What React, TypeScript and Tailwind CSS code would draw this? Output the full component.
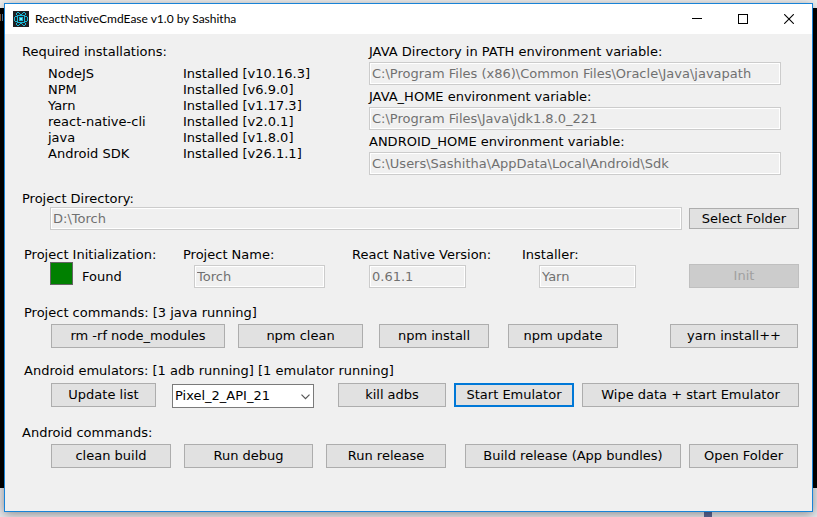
import { useState, type ReactNode } from "react";

const buttonBase =
  "flex shrink-0 items-center justify-center whitespace-nowrap text-[13px] leading-4";

function ActionButton({
  children,
  className = "",
  focused = false,
  disabled = false,
}: {
  children: ReactNode;
  className?: string;
  focused?: boolean;
  disabled?: boolean;
}) {
  const tone = disabled
    ? "border border-[#bfbfbf] bg-[#cccccc] text-[#a0a0a0]"
    : focused
      ? "border-2 border-[#0078d7] bg-[#e1e1e1] text-black"
      : "border border-[#adadad] bg-[#e1e1e1] text-black";
  return (
    <button type="button" disabled={disabled} className={`${buttonBase} ${tone} ${className}`}>
      {children}
    </button>
  );
}

function ReadOnlyField({ id, value, className = "" }: { id: string; value: string; className?: string }) {
  return (
    <input
      id={id}
      type="text"
      readOnly
      value={value}
      className={`h-[23px] min-w-0 border border-[#cccccc] bg-[#f0f0f0] px-[2px] text-[13px] leading-4 text-[#707070] shadow-[inset_0_0_0_1px_#ffffff] outline-none ${className}`}
    />
  );
}

const tools = [
  ["NodeJS", "v10.16.3"],
  ["NPM", "v6.9.0"],
  ["Yarn", "v1.17.3"],
  ["react-native-cli", "v2.0.1"],
  ["java", "v1.8.0"],
  ["Android SDK", "v26.1.1"],
];

const environment = [
  { id: "java-path", label: "JAVA Directory in PATH environment variable:", value: "C:\\Program Files (x86)\\Common Files\\Oracle\\Java\\javapath" },
  { id: "java-home", label: "JAVA_HOME environment variable:", value: "C:\\Program Files\\Java\\jdk1.8.0_221" },
  { id: "android-home", label: "ANDROID_HOME environment variable:", value: "C:\\Users\\Sashitha\\AppData\\Local\\Android\\Sdk" },
];

function AppIcon() {
  return (
    <svg width="16" height="16" viewBox="0 0 16 16" aria-hidden="true" shapeRendering="crispEdges" className="shrink-0">
      <rect width="16" height="16" fill="#1f2024" />
      <path
        d="M4 1h2v1H4zM10 1h2v1h-2zM3 2h1v2H3zM6 2h1v1H6zM9 2h1v1H9zM12 2h1v2h-1zM7 3h2v1H7zM4 4h8v1H4zM2 5h2v1H2zM12 5h2v1h-2zM4 5h1v6H4zM11 5h1v6h-1zM1 6h1v1H1zM14 6h1v1h-1zM1 9h1v1H1zM14 9h1v1h-1zM2 10h2v1H2zM12 10h2v1h-2zM4 11h8v1H4zM7 12h2v1H7zM3 12h1v2H3zM12 12h1v2h-1zM6 13h1v1H6zM9 13h1v1H9zM4 14h2v1H4zM10 14h2v1h-2zM1 7h1v2H1zM14 7h1v2h-1z"
        fill="#17b4d3"
      />
      <path d="M6 6h4v4H6z" fill="#17b4d3" />
      <path d="M7 7h2v2H7z" fill="#7af0ff" />
    </svg>
  );
}

function TitleBar() {
  const control = "flex h-[30px] w-[46px] items-center justify-center";
  return (
    <header className="flex h-[30px] items-center bg-white pl-2">
      <AppIcon />
      <h1 className="ml-[6px] font-[Lato,sans-serif] text-[12px] leading-4 whitespace-nowrap text-black">
        ReactNativeCmdEase v1.0 by Sashitha
      </h1>
      <div className="ml-auto flex">
        <button type="button" aria-label="Minimize" className={control}>
          <svg width="10" height="10" viewBox="0 0 10 10">
            <path d="M0 4.5H10" stroke="#000" />
          </svg>
        </button>
        <button type="button" aria-label="Maximize" className={control}>
          <svg width="10" height="10" viewBox="0 0 10 10">
            <rect x=".5" y=".5" width="9" height="9" fill="none" stroke="#000" />
          </svg>
        </button>
        <button type="button" aria-label="Close" className={control}>
          <svg width="10" height="10" viewBox="0 0 10 10">
            <path d="M.2 .2 9.8 9.8M9.8 .2 .2 9.8" stroke="#000" strokeWidth="1.1" />
          </svg>
        </button>
      </div>
    </header>
  );
}

function Installations() {
  return (
    <div className="flex">
      <section className="w-[347px] shrink-0">
        <h2>Required installations:</h2>
        <table className="mt-[6px] ml-[26px] border-collapse text-left">
          <tbody>
            {tools.map(([name, version]) => (
              <tr key={name}>
                <th scope="row" className="w-[135px] p-0 font-normal">{name}</th>
                <td className="p-0">Installed [{version}]</td>
              </tr>
            ))}
          </tbody>
        </table>
      </section>
      <section className="mr-[18px] flex min-w-0 flex-1 flex-col gap-1">
        {environment.map((item) => (
          <div key={item.id} className="flex flex-col gap-[2px]">
            <label htmlFor={item.id}>{item.label}</label>
            <ReadOnlyField id={item.id} value={item.value} />
          </div>
        ))}
      </section>
    </div>
  );
}

function ProjectDirectory() {
  return (
    <section className="mt-4 flex flex-col">
      <label htmlFor="directory">Project Directory:</label>
      <div className="ml-7 flex items-center gap-[7px]">
        <ReadOnlyField id="directory" value={"D:\\Torch"} className="flex-1" />
        <ActionButton className="h-[21px] w-[110px]">Select Folder</ActionButton>
      </div>
    </section>
  );
}

function ProjectDetails() {
  return (
    <section className="mt-[17px] ml-[2px] grid grid-cols-[159px_169px_170px_1fr_110px]">
      <div>
        <h2>Project Initialization:</h2>
        <div className="-mt-px ml-[26px] flex items-center gap-[9px]">
          <span className="size-[23px] border border-[#646464] bg-[#008000]" />
          <span className="pt-[6px]">Found</span>
        </div>
      </div>
      <div className="flex flex-col gap-[2px]">
        <label htmlFor="project-name">Project Name:</label>
        <ReadOnlyField id="project-name" value="Torch" className="ml-[11px] w-[131px]" />
      </div>
      <div className="flex flex-col gap-[2px]">
        <label htmlFor="rn-version">React Native Version:</label>
        <ReadOnlyField id="rn-version" value="0.61.1" className="ml-[17px] w-[97px]" />
      </div>
      <div className="flex flex-col gap-[2px]">
        <label htmlFor="installer">Installer:</label>
        <ReadOnlyField id="installer" value="Yarn" className="ml-[17px] w-[97px]" />
      </div>
      <ActionButton disabled className="h-6 w-[110px] self-end">Init</ActionButton>
    </section>
  );
}

function ProjectCommands() {
  return (
    <section className="mt-[17px]">
      <h2 className="ml-[2px]">Project commands: [3 java running]</h2>
      <div className="mt-[3px] mr-px ml-[29px] flex">
        <ActionButton className="h-6 w-[174px]">rm -rf node_modules</ActionButton>
        <ActionButton className="ml-[13px] h-6 w-[125px]">npm clean</ActionButton>
        <ActionButton className="ml-4 h-6 w-[110px]">npm install</ActionButton>
        <ActionButton className="ml-[19px] h-6 w-[110px]">npm update</ActionButton>
        <ActionButton className="ml-auto h-6 w-[128px]">yarn install++</ActionButton>
      </div>
    </section>
  );
}

function Emulators() {
  const [device, setDevice] = useState("Pixel_2_API_21");
  return (
    <section className="mt-[15px]">
      <h2 className="ml-[2px]">Android emulators: [1 adb running] [1 emulator running]</h2>
      <div className="mt-1 ml-[29px] flex">
        <ActionButton className="h-6 w-[105px]">Update list</ActionButton>
        <div className="relative mt-px ml-4 w-[142px]">
          <select
            aria-label="Emulator"
            value={device}
            onChange={(event) => setDevice(event.target.value)}
            className="block h-6 w-full appearance-none border border-[#7a7a7a] bg-white pr-5 pl-[2px] text-[13px] leading-4 text-black outline-none"
          >
            <option>Pixel_2_API_21</option>
          </select>
          <svg width="9" height="6" viewBox="0 0 9 6" className="pointer-events-none absolute top-[10px] right-1">
            <path d="M.5 .7 4.5 4.7 8.5 .7" fill="none" stroke="#555" strokeWidth="1.2" />
          </svg>
        </div>
        <ActionButton className="ml-6 h-6 w-[108px]">kill adbs</ActionButton>
        <ActionButton focused className="ml-2 h-6 w-[120px]">Start Emulator</ActionButton>
        <ActionButton className="ml-auto h-6 w-[217px]">Wipe data + start Emulator</ActionButton>
      </div>
    </section>
  );
}

function AndroidCommands() {
  return (
    <section className="mt-[17px]">
      <h2>Android commands:</h2>
      <div className="mt-[3px] mr-px ml-[29px] flex">
        <ActionButton className="h-6 w-[120px]">clean build</ActionButton>
        <ActionButton className="ml-[13px] h-6 w-[129px]">Run debug</ActionButton>
        <ActionButton className="ml-[13px] h-6 w-[120px]">Run release</ActionButton>
        <ActionButton className="ml-auto h-6 w-[216px]">Build release (App bundles)</ActionButton>
        <ActionButton className="ml-2 h-6 w-[109px]">Open Folder</ActionButton>
      </div>
    </section>
  );
}

export default function App() {
  return (
    <div className="relative flex min-h-screen flex-col overflow-hidden px-1 pt-[3px] pb-[5px]">
      <div aria-hidden="true" className="absolute inset-0 flex flex-col">
        <div className="h-2 bg-[#f0f0f0]" />
        <div className="flex flex-1 gap-px bg-black pt-[6px]">
          <div className="h-[7px] w-px bg-[#8a5a34]" />
          <div className="h-[7px] w-px bg-[#4f7fae]" />
        </div>
        <div className="flex h-[29px] items-end bg-[#e6e6ea]">
          <div className="ml-[704px] h-2 w-2 bg-[#5a6696]" />
        </div>
      </div>
      <main className="relative flex flex-1 flex-col border border-[#1883d7] bg-[#f0f0f0] shadow-[0_2px_10px_rgba(0,0,0,0.4)]">
        <TitleBar />
        <div className="pt-[10px] pr-[13px] pb-8 pl-[17px] font-['DejaVu_Sans',sans-serif] text-[13px] leading-4 text-black">
          <Installations />
          <ProjectDirectory />
          <ProjectDetails />
          <ProjectCommands />
          <Emulators />
          <AndroidCommands />
        </div>
      </main>
    </div>
  );
}
